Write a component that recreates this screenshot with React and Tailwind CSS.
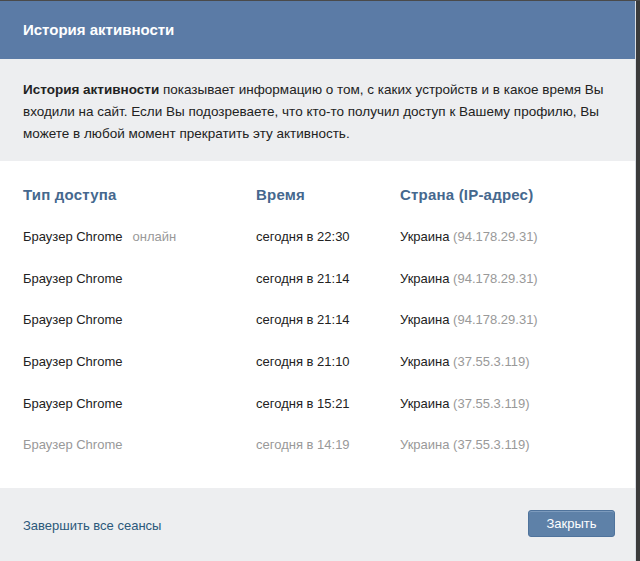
import React from 'react';

const rows = [
  { device: 'Браузер Chrome', online: true, time: 'сегодня в 22:30', ip: '94.178.29.31' },
  { device: 'Браузер Chrome', time: 'сегодня в 21:14', ip: '94.178.29.31' },
  { device: 'Браузер Chrome', time: 'сегодня в 21:14', ip: '94.178.29.31' },
  { device: 'Браузер Chrome', time: 'сегодня в 21:10', ip: '37.55.3.119' },
  { device: 'Браузер Chrome', time: 'сегодня в 15:21', ip: '37.55.3.119' },
  { device: 'Браузер Chrome', time: 'сегодня в 14:19', ip: '37.55.3.119', faded: true },
];

const App = () => {
  return (
    <div className="w-[640px] h-[561px] overflow-hidden bg-[#4a4a4a] pt-px font-['Liberation_Sans',sans-serif] text-[13px] text-[#222]">
      <div className="flex h-full">
        <div className="w-[636px] h-full flex flex-col bg-white border-r border-[#d8dde4]">
          <div className="h-[58px] bg-[#5b7ba6] flex items-center px-[23px]">
            <h1 className="text-white font-bold text-[15px]">История активности</h1>
          </div>

          <div className="bg-[#edeef0] h-[102px] px-[23px] pt-[20px] leading-[22px] text-[13.5px]">
            <p>
              <b>История активности</b> показывает информацию о том, с каких устройств и в какое время Вы
              входили на сайт. Если Вы подозреваете, что кто-то получил доступ к Вашему профилю, Вы
              можете в любой момент прекратить эту активность.
            </p>
          </div>

          <div className="flex-1 px-[23px] pt-[23px]">
            <div className="grid grid-cols-[233px_144px_1fr] h-[20px] items-center font-bold text-[15px] tracking-[0.2px] text-[#45688e]">
              <div>Тип доступа</div>
              <div>Время</div>
              <div>Страна (IP-адрес)</div>
            </div>
            <div className="mt-[23px]">
              {rows.map((r, i) => (
                <div
                  key={i}
                  className={`grid grid-cols-[233px_144px_1fr] h-[41.7px] items-start ${r.faded ? 'text-[#999]' : ''}`}
                >
                  <div>
                    {r.device}
                    {r.online && <span className="ml-[10px] text-[#999]">онлайн</span>}
                  </div>
                  <div>{r.time}</div>
                  <div>
                    Украина <span className="text-[#999]">({r.ip})</span>
                  </div>
                </div>
              ))}
            </div>
          </div>

          <div className="h-[73px] bg-[#edeef0] flex items-center justify-between pl-[23px] pr-[20px]">
            <a className="text-[#2b587a] cursor-pointer mt-[2px]">Завершить все сеансы</a>
            <button className="w-[87px] h-[27px] rounded-[3px] bg-[#5e81a8] border border-[#4f739c] text-white text-[13px] shadow-[inset_0_1px_0_#7d9bbd] mt-[-2px]">
              Закрыть
            </button>
          </div>
        </div>
        <div className="flex-1 bg-[#3b3b3b]" />
      </div>
    </div>
  );
};

export default App;
